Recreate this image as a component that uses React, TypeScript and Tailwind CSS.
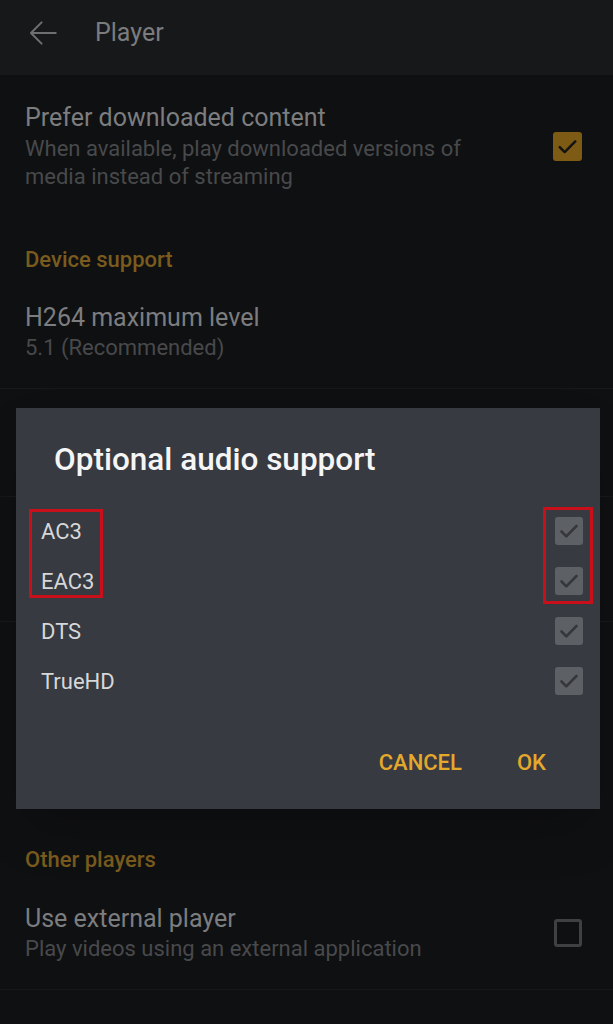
import React from "react";

const font = { fontFamily: "Roboto, 'Noto Sans', sans-serif" };

function Check({ color, w = 2.6 }: { color: string; w?: number }) {
  return (
    <svg viewBox="0 0 24 24" className="w-full h-full" fill="none">
      <path d="M4.5 12.5l4.8 4.8L19.5 7" stroke={color} strokeWidth={w} strokeLinecap="round" strokeLinejoin="round" />
    </svg>
  );
}

export default function App() {
  const items = ["AC3", "EAC3", "DTS", "TrueHD"];
  return (
    <div className="relative w-[613px] h-[1024px] bg-[#0f1012] overflow-hidden" style={font}>
      <div className="h-[75px] bg-[#17181a] flex items-center pb-[10px]">
        <svg viewBox="0 0 24 24" className="w-[34px] h-[34px] ml-[26px] mr-[35px]" fill="none">
          <path d="M21 12H4M11 4.5L3.5 12 11 19.5" stroke="#6e6f71" strokeWidth="1.4" strokeLinecap="round" strokeLinejoin="round" />
        </svg>
        <span className="text-[25px] text-[#7b7c7e]">Player</span>
      </div>

      <div className="h-[144px] pt-[27px] pl-[25px] pr-[31px]">
        <div className="flex items-center">
          <div className="flex-1">
            <div className="text-[25px] leading-[32px] text-[#7c7d7f]">Prefer downloaded content</div>
            <div className="text-[22px] leading-[29px] text-[#48494b]">When available, play downloaded versions of</div>
            <div className="text-[22px] leading-[28px] text-[#48494b]">media instead of streaming</div>
          </div>
          <div className="w-[29px] h-[29px] rounded-[3px] bg-[#7d5b14] p-[2px]">
            <Check color="#141414" w={2.4} />
          </div>
        </div>
      </div>

      <div className="h-[80px] flex items-center pl-[25px] text-[22px] font-medium text-[#7a5b1e]">Device support</div>

      <div className="h-[90px] pt-[3px] pl-[25px] pr-[31px] border-b border-[#17181a]">
        <div className="text-[25px] leading-[32px] text-[#7c7d7f]">H264 maximum level</div>
        <div className="text-[22px] leading-[28px] text-[#48494b]">5.1 (Recommended)</div>
      </div>
      <div className="h-[108px] border-b border-[#17181a]" />
      <div className="h-[125px] border-b border-[#17181a]" />
      <div className="h-[197px]" />

      <div className="h-[80px] flex items-center pl-[25px] text-[22px] font-medium text-[#7a5b1e]">Other players</div>

      <div className="h-[91px] pt-[3px] pl-[25px] pr-[31px] border-b border-[#17181a]">
        <div className="flex items-center">
          <div className="flex-1">
            <div className="text-[25px] leading-[33px] text-[#7c7d7f]">Use external player</div>
            <div className="text-[22px] leading-[28px] text-[#48494b]">Play videos using an external application</div>
          </div>
          <div className="w-[28px] h-[28px] rounded-[3px] border-[3px] border-[#3f4042]" />
        </div>
      </div>

      <div className="absolute left-[16px] top-[408px] w-[584px] h-[401px] bg-[#373a40] shadow-2xl">
        <div className="pt-[34px] pl-[38px] text-[31.5px] leading-[36px] font-medium text-[#f5f5f5]">Optional audio support</div>
        <div className="mt-[28px]">
          {items.map((it) => (
            <div key={it} className="h-[50px] flex items-center pl-[25px] pr-[17px]">
              <span className="flex-1 text-[22px] text-[#d6d7d8]">{it}</span>
              <div className="w-[28px] h-[28px] rounded-[3px] bg-[#5d6065] p-[2px]">
                <Check color="#35373b" />
              </div>
            </div>
          ))}
        </div>
        <div className="mt-[32px] h-[48px] flex items-center justify-end pr-[54px] gap-[55px]">
          <span className="text-[22px] font-medium text-[#e4a82b]">CANCEL</span>
          <span className="text-[22px] font-medium text-[#e4a82b]">OK</span>
        </div>
        <div className="absolute left-[13px] top-[101px] w-[74px] h-[89px] border-[3px] border-[#c8101a]" />
        <div className="absolute left-[527px] top-[99px] w-[50px] h-[97px] border-[3px] border-[#c8101a]" />
      </div>
    </div>
  );
}
